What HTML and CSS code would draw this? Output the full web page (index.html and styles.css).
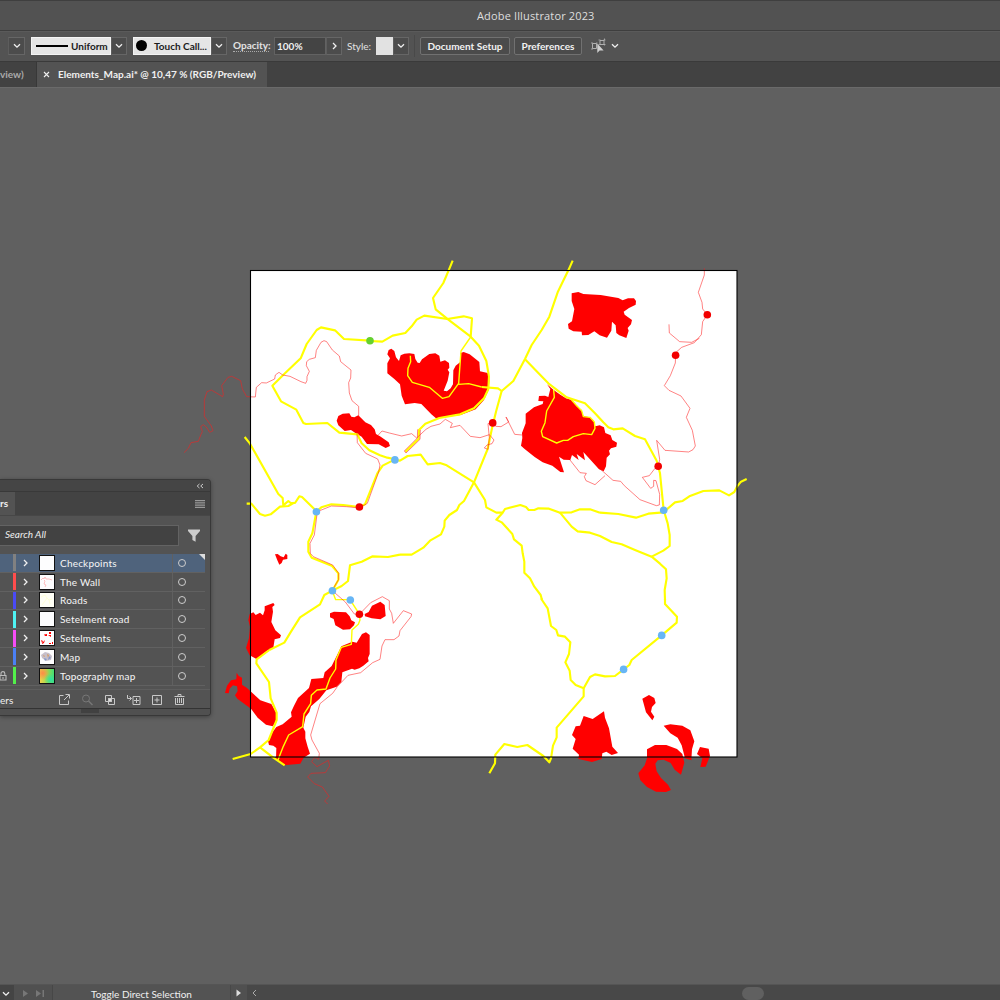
FILE: index.html
```html
<!DOCTYPE html>
<html lang="en">
<head>
<meta charset="utf-8">
<title>Adobe Illustrator 2023</title>
<link rel="stylesheet" href="styles.css">
</head>
<body>
<svg width="0" height="0" class="defs">
  <symbol id="down" viewBox="0 0 8 6"><path d="M1 1.2 4 4.2 7 1.2" fill="none" stroke="currentColor" stroke-width="1.3"/></symbol>
  <symbol id="right" viewBox="0 0 5 8"><path d="M1 1 4 4 1 7" fill="none" stroke="currentColor" stroke-width="1.3"/></symbol>
</svg>
<div class="app">
  <header class="titlebar"><span class="title">Adobe Illustrator 2023</span></header>
  <div class="toolbar">
    <div class="drop first"><svg class="chev"><use href="#down"/></svg></div>
    <div class="light uniform"><i class="line"></i><span class="t-uniform">Uniform</span></div>
    <div class="drop"><svg class="chev"><use href="#down"/></svg></div>
    <div class="light touch"><i class="dot"></i><span class="t-touch">Touch Call...</span></div>
    <div class="drop"><svg class="chev"><use href="#down"/></svg></div>
    <div class="label opacity"><span class="t-opacity">Opacity:</span></div>
    <div class="field"><span class="t-100">100%</span></div>
    <div class="drop"><svg class="chev-r"><use href="#right"/></svg></div>
    <div class="label style"><span class="t-style">Style:</span></div>
    <div class="swatch"></div>
    <div class="drop"><svg class="chev"><use href="#down"/></svg></div>
    <div class="sep"></div>
    <button class="btn setup"><span class="t-setup">Document Setup</span></button>
    <button class="btn prefs"><span class="t-prefs">Preferences</span></button>
    <svg class="select-icon" viewBox="0 0 16 16"><g fill="none" stroke="#b0b0b0"><path d="M1.500 5.500h4v5h-4zM9 2.500h4v4h-4z"/><path d="M0 5h2M0 11h2M5 5h1.500M7.500 2h2M12.500 2h2M13.500 .5v2M12.500 6.500h2M13.500 6v1.500M7.500 6.500h2" stroke-width=".8"/></g><path d="M6.300 5.500v9.500l2.300-2.500h4z" fill="#d0d0d0"/></svg>
    <svg class="chev end"><use href="#down"/></svg>
  </div>
  <div class="tabs">
    <div class="tab old"><span class="t-old">view)</span></div>
    <div class="tab active"><svg class="close" viewBox="0 0 7 7"><path d="M1 1 6 6M6 1 1 6" stroke="#f0f0f0" stroke-width="1.1"/></svg><span class="t-tab">Elements_Map.ai* @ 10,47 % (RGB/Preview)</span></div>
  </div>
  <main class="workspace">
    <svg class="map" viewBox="0 87 1000 897">
      <rect x="251" y="271" width="486" height="486" fill="#fff"/>
      <g class="area">
        <g transform="translate(180 310) scale(.33333)">
          <path d="M470 332 475 318 488 311 508 310 514 320 523 322 535 316 556 337 573 345 584 358 588 372 600 379 626 397 630 408 617 414 596 403 561 402 545 380 526 369 513 360 494 363 475 346Z"/>
        </g>
        <g transform="translate(370 255) scale(.33333)">
          <path d="M56 285 64 281 73 288 78 307 87 318 92 301 103 296 118 295 133 297 136 312 143 323 149 324 156 313 178 297 196 295 208 302 211 320 225 316 237 324 238 338 233 344 238 352 233 377 221 407 231 409 242 400 249 388 250 346 257 332 270 322 271 294 281 291 299 298 314 310 328 321 330 349 353 354 358 375 356 405 342 435 317 463 272 480 198 490 184 478 154 447 134 444 105 448 95 422 90 388 73 372 52 355 52 325 60 310 52 298Z"/>
        </g>
        <g transform="translate(500 260) scale(.33333)">
          <path d="M215 100 235 96 250 102 302 105 355 114 368 121 384 115 402 115 408 123 407 134 387 144 371 155 374 164 396 180 393 193 383 204 386 212 379 234 358 226 349 219 347 196 336 185 334 212 321 233 299 226 283 214 265 225 246 226 245 215 220 214 206 206 204 192 216 184 223 147 215 123Z"/>
          <path d="M141 373 161 390 181 404 198 415 215 420 230 439 244 449 250 468 269 472 280 481 286 499 299 496 312 502 316 519 332 526 337 540 351 548 349 560 333 565 327 572 330 583 320 593 318 619 311 634 297 628 278 607 250 576 255 601 230 582 236 600 216 585 211 600 191 599 177 590 192 637 181 636 157 617 128 607 104 591 73 566 63 557 67 534 66 519 77 490 77 461 102 442 128 432 130 424 115 423 117 408 135 407 145 411 151 387Z"/>
        </g>
        <g transform="translate(220 490) scale(.33333)">
          <path d="M165 193 173 192 182 199 191 202 197 191 202 195 202 207 189 209 185 219 178 224 172 211Z"/>
        </g>
        <g transform="translate(220 590) scale(.33333)">
          <path d="M89 72 100 67 107 75 120 68 129 76 134 61 134 49 160 39 164 45 157 51 159 65 154 96 166 121 183 136 180 144 164 148 160 173 140 183 111 208 89 196 78 174 87 144 90 110 85 90Z"/>
          <path d="M330 70 342 65 378 67 389 79 394 91 405 97 402 106 390 118 369 119 346 106 341 87 330 82Z"/>
          <path d="M434 72 446 66 456 47 481 35 494 45 497 78 481 88 455 85 435 79Z"/>
          <path d="M50 248 56 258 66 263 66 284 80 293 121 331 154 342 169 368 169 394 158 409 138 404 113 383 93 356 52 326 45 316 53 303 51 289 39 286 29 296 26 310 15 309 21 287 33 271 49 268Z"/>
          <path d="M364 169 397 155 410 158 426 132 438 127 449 135 449 192 444 204 446 214 430 227 418 235 404 239 396 236 367 247 364 276 350 290 319 301 298 327 273 349 268 366 257 380 250 413 256 425 256 445 263 470 270 491 251 503 241 521 192 526 168 508 169 474 160 467 147 465 144 453 155 430 169 411 188 403 215 380 213 367 222 347 234 324 267 294 274 267 310 264 314 247 335 228 348 202Z"/>
        </g>
        <g transform="translate(480 600) scale(.33333)">
          <path d="M311 348 338 357 372 334 375 353 387 385 397 440 414 459 395 465 379 455 367 460 365 477 336 486 295 477 297 464 278 446 287 417 276 405 287 379 300 377Z"/>
          <path d="M487 296 507 285 523 294 527 309 516 321 513 335 523 350 517 361 498 337Z"/>
          <path d="M551 377 571 373 607 377 631 391 643 424 636 448 634 481 615 475 605 436 593 413 571 400Z"/>
          <path d="M501 448 525 435 559 435 591 447 607 462 613 488 603 524 584 509 572 489 551 479 533 481 526 491 530 514 543 534 564 554 573 570 558 576 528 575 501 561 481 541 475 520 494 496 501 475Z"/>
          <path d="M660 441 686 446 690 468 677 500 661 501 667 475 651 462Z"/>
        </g>
      </g>
      <g class="road">
        <g transform="translate(180 310) scale(.33333)">
          <path d="M570 92 492 87 465 61 423 52 410 60 380 102 362 145 315 190 277 227 303 274 349 299 370 339 378 342 442 339 478 368 532 373 545 400 568 421 600 436 622 443 645 448"/>
          <path d="M194 381 210 401 295 552 308 564 310 586 325 573 332 579 345 579 358 559 366 561 410 604"/>
          <path d="M410 604 424 592 454 583 490 585 538 591 555 583 592 490 608 467 645 448"/>
        </g>
        <g transform="translate(370 255) scale(.33333)">
          <path d="M248 17 236 46 220 84 189 129 197 163 235 194 302 245 327 272 349 318 357 365 355 402 342 430 312 460 270 478 208 489 166 506 147 525 146 551 106 590"/>
          <path d="M0 258 37 260 68 242 106 234 125 214 140 194 163 182 232 192 281 184 306 190 302 246"/>
          <path d="M608 17 595 46 563 112 538 185 515 225 485 270 465 312 430 378 395 408 384 400 335 396"/>
          <path d="M395 408 378 470 366 520 353 582 312 682"/>
        </g>
        <g transform="translate(400 420) scale(.33333)">
          <path d="M-15 120 0 122 23 108 62 104 83 133 120 129 140 136 222 187 255 240 259 262 289 278 308 278 315 267 361 255 378 261 386 270 403 270 415 265 447 266 480 278 515 277 540 268 570 268 600 278"/>
          <path d="M480 278 515 320 533 334 570 338 600 348 635 366 665 373 705 390 755 410"/>
          <path d="M308 278 289 299 305 307 337 342 342 358 365 377 368 400 373 425 373 458 390 475 403 500 422 525 426 540"/>
          <path d="M222 187 192 243 178 255 171 270 148 285 134 302 133 320 123 343 90 362 70 383 35 404 0 404"/>
        </g>
        <g transform="translate(500 260) scale(.33333)">
          <path d="M75 298 145 370 200 412 255 430 285 460 310 487 325 502 340 508 368 505 405 528 435 538 470 602 480 640 491 750"/>
          <path d="M300 758 355 762 408 773 445 761 490 757 525 727 548 723 568 709 610 693 658 691 687 706 703 696 711 680 723 665 740 657"/>
          <path d="M491 750 503 790 509 825 509 858 490 872 455 890 480 911 498 928 500 955 494 990 495 1020"/>
        </g>
        <g transform="translate(220 490) scale(.33333)">
          <path d="M540 194 504 201 458 199 425 215 390 226 384 273 365 288 337 302 313 315 300 343 240 382 213 425 193 458 148 480"/>
          <path d="M80 41 94 41 120 72 135 77 152 73 180 50 205 48 223 38"/>
          <path d="M289 65 277 130 265 155 265 185 275 203 335 227 355 250 355 270 337 302"/>
        </g>
        <g transform="translate(220 590) scale(.33333)">
          <path d="M148 180 110 208 109 220 147 276 152 325 170 368 170 390 146 450 120 472 92 492 38 507"/>
          <path d="M120 472 160 503 194 526"/>
        </g>
        <g transform="translate(480 600) scale(.33333)">
          <path d="M184 -5 186 0 203 25 213 78 229 90 234 106 255 110 271 127 267 162 256 187 269 212 272 240 287 255 311 265 311 289 230 383 230 412 219 437 213 475 208 487 190 468 142 435 112 441 73 432 46 464 45 490 28 520"/>
          <path d="M311 265 330 231 345 223 375 229 405 228 431 208 448 195 455 180 545 106 590 68 591 50 555 12 555 -3"/>
        </g>
      </g>
      <g class="road thin">
        <g transform="translate(370 255) scale(.33333)">
          <path d="M302 246 273 288 266 385 237 425 217 430 178 397 127 382 113 362 114 340 122 320 121 302M266 388 296 386 335 396"/>
        </g>
        <g transform="translate(500 260) scale(.33333)">
          <path d="M161 390 163 412 140 453 135 488 124 514 128 530 170 549 190 541 203 541 220 530 250 521 275 524 285 505 283 486 270 472 250 470 245 452 228 435 213 418"/>
        </g>
        <g transform="translate(220 590) scale(.33333)">
          <path d="M337 3 347 29 390 29 418 72 420 90 415 103 396 120 394 163 364 172 348 210 347 237 330 264 318 297 291 300 274 316 272 341 252 372 248 410 206 435 190 469 174 510"/>
        </g>
      </g>
      <g class="wall">
        <g transform="translate(180 310) scale(.33333)">
          <path d="M12 428 25 415 33 398 55 394 63 373 67 365 62 350 70 344 79 351 89 367 99 362 94 348 73 319 73 270 81 245 94 240 128 260 130 252 125 227 144 202 155 199 182 212 187 237 200 260 226 261 229 232 245 218 259 219 284 207 286 195 297 187 308 195 330 199 363 215 377 220 381 211 381 200 388 184 379 167 380 155 388 148 406 143 409 121 423 97 432 92 440 95 457 120 478 138 482 155 498 168 513 180 512 204 506 218 508 249 516 272 536 289 536 320M531 370 532 398 557 430 593 447 600 465 596 486 562 580 538 594 500 590 454 588 414 604"/>
        </g>
        <g transform="translate(370 255) scale(.33333)">
          <path d="M25 540 36 528 58 534 95 543 125 536 140 549 168 523 183 514 210 507 226 493 247 505 241 518 270 511 301 544 330 548 358 539 372 555 366 566 351 570 343 579 354 583 358 549 354 506 366 503 378 514 393 515 416 501 408 486 434 538 456 540M143 523 142 549 103 588 108 594 150 553 151 525"/>
        </g>
        <g transform="translate(500 260) scale(.33333)">
          <path d="M613 25V45L595 97 606 127 608 147 622 164 608 185 604 224 583 248 545 262 527 278 526 309 511 347 493 377 507 391 543 408 570 445 559 472 577 511 586 558 579 569 566 576 495 571 470 541 479 598 475 618 465 625 448 647 427 652 452 685 461 679 461 661 468 662 479 703 478 735 469 737 420 719 373 677 362 664 339 661 303 629M507 193 508 219 539 245 575 247 598 235M210 600 240 638 259 640 253 650 258 662 285 674 315 647"/>
        </g>
        <g transform="translate(220 490) scale(.33333)">
          <path d="M292 65 283 135 270 160 271 190 280 200 338 225 356 250 356 268 340 295M337 302 376 336 403 372 418 373 452 338 487 320 508 332 508 357 515 370 520 400 550 362 575 372 573 380 540 422 537 438 522 449 495 449 486 468 480 508 458 518 422 548 384 556 352 590 338 610 300 641 272 735 276 750 298 790 296 808 284 802 275 815 291 830 325 811 329 828 316 848 273 850 263 861 283 881 307 891 327 919 314 933 323 942"/>
        </g>
      </g>
      <rect x="250.500" y="270.500" width="486.500" height="486.500" fill="none" stroke="#000" stroke-width="1.1"/>
      <g fill="#f20000"><circle cx="707.300" cy="314.800" r="3.800"/><circle cx="675.600" cy="355.300" r="3.800"/><circle cx="492.700" cy="422.900" r="3.800"/><circle cx="658.200" cy="466.200" r="3.800"/><circle cx="359.400" cy="507" r="3.800"/><circle cx="359.400" cy="614.300" r="3.800"/></g>
      <g fill="#67b6f5"><circle cx="394.900" cy="459.900" r="3.800"/><circle cx="316.400" cy="511.800" r="3.800"/><circle cx="663.700" cy="510.300" r="3.800"/><circle cx="332.400" cy="590.800" r="3.800"/><circle cx="350.300" cy="600" r="3.800"/><circle cx="661.700" cy="635.400" r="3.800"/><circle cx="623.600" cy="669.400" r="3.800"/></g>
      <circle cx="370" cy="340.800" r="3.800" fill="#65d12f"/>
    </svg>
    <aside class="panel">
      <div class="panel-top"><svg class="collapse" viewBox="0 0 8 6"><path d="M3.500 1 1.200 3 3.500 5M7 1 4.700 3 7 5" fill="none" stroke="#ccc"/></svg></div>
      <div class="panel-tabs"><div class="panel-tab"><span class="t-rs">rs</span></div><svg class="menu" viewBox="0 0 10 8"><path d="M0 .7h10M0 2.900h10M0 5.100h10M0 7.300h10" stroke="#bbb" stroke-width=".9"/></svg></div>
      <div class="panel-body">
        <div class="search-row"><div class="search"><span class="t-search">Search All</span></div><svg class="funnel" viewBox="0 0 12 13"><path d="M0 .5h12V2L7.600 7v5.700L4.400 11V7L0 2z" fill="#ccc"/></svg></div>
        <div class="layers">
          <div class="row selected"><i class="bar gray"></i><svg class="arrow"><use href="#right"/></svg><i class="thumb"></i><span class="name t-l1">Checkpoints</span><i class="ring"></i><i class="corner"></i></div>
          <div class="row"><i class="bar red"></i><svg class="arrow"><use href="#right"/></svg><svg class="thumb" viewBox="0 0 14 14"><path d="M1 5 3 3 4 4 5 2 6 4 9 4 12 5M4 5 5 6 4 9 6 10 5 12" fill="none" stroke="#f99" stroke-width=".6"/></svg><span class="name t-l2">The Wall</span><i class="ring"></i></div>
          <div class="row"><i class="bar blue"></i><svg class="arrow"><use href="#right"/></svg><svg class="thumb cream" viewBox="0 0 14 14"><path d="M1 4 5 2 7 5 9 7 12 6M7 5 5 8 2 12M9 7 10 11" fill="none" stroke="#ffc" stroke-width=".7"/></svg><span class="name t-l3">Roads</span><i class="ring"></i></div>
          <div class="row"><i class="bar cyan"></i><svg class="arrow"><use href="#right"/></svg><i class="thumb"></i><span class="name t-l4">Setelment road</span><i class="ring"></i></div>
          <div class="row"><i class="bar pink"></i><svg class="arrow"><use href="#right"/></svg><svg class="thumb" viewBox="0 0 14 14"><path d="M4 3.500 7 3 7 5 5 5zM9 1h2v2H9zM8 4l3 0v2zM1 9l2 1-1 2zM2 12l3-3-1 3-2 1zM9 12h2v1H9zM12 11h1v2h-1z" fill="red"/></svg><span class="name t-l5">Setelments</span><i class="ring"></i></div>
          <div class="row"><i class="bar azure"></i><svg class="arrow"><use href="#right"/></svg><svg class="thumb" viewBox="0 0 14 14"><path d="M1 5 5 2 9 3 12 6 11 10 6 11 2 8z" fill="#c6bfca"/><path d="M7 4 9 5 8 8zM3 5l2 1-1 1z" fill="#d59a60"/><path d="M9 6l2 2-3 2zM4 8l3 1-2 2z" fill="#8498cb"/></svg><span class="name t-l6">Map</span><i class="ring"></i></div>
          <div class="row"><svg class="lock" viewBox="0 0 8 10"><path d="M0 4.500h6v4.500H0zM1 4V2.500a1.900 1.900 0 0 1 3.800 0V4M3 6v2" fill="none" stroke="#bbb" stroke-width="1.100"/></svg><i class="bar green"></i><svg class="arrow"><use href="#right"/></svg><i class="thumb topo"></i><span class="name t-l7">Topography map</span><i class="ring"></i></div>
        </div>
        <div class="panel-foot">
          <span class="t-ers">ers</span>
          <svg class="tools" viewBox="58 0 130 18" fill="none" stroke="#c8c8c8">
            <path d="M63.500 4.500h-4v9h9v-4M64 9 69 4M65.500 3.500h4v4"/>
            <g stroke="#777"><circle cx="86" cy="7.500" r="3.500"/><path d="m88.500 10 4 4" stroke-width="1.500"/></g>
            <path d="M105.500 4.500h6v6h-6zM108.500 7.500h6v6h-6z"/><path d="M108.500 7.500h3v3h-3z" fill="#ddd"/>
            <path d="M127.500 4v3.500h4M129.500 5.500l2 2-2 2M133 5.500h7v8h-7zM136.500 7v5M134 9.500h5"/>
            <path d="M152.500 4.500h9v9h-9zM157 6.500v5M154.500 9h5"/>
            <path d="M174.500 5.500h10M178 5.500v-2h3v2M175.500 7v6.500h8V7M177.500 7v5M179.500 7v5M181.500 7v5"/>
          </svg>
        </div>
      </div>
      <div class="grip-row"><i class="grip"></i></div>
    </aside>
  </main>
  <footer class="status">
    <div class="s-drop"><svg class="chev"><use href="#down"/></svg></div>
    <svg class="nav" viewBox="0 0 38 16" fill="#777"><path d="M9 5v7l5-3.500zM22 5v7l5-3.500zM28.500 5H30v7h-1.500z"/></svg>
    <div class="tool"><span class="t-status">Toggle Direct Selection</span></div>
    <div class="play"><svg viewBox="0 0 6 8"><path d="M.5.500v7L5 4z" fill="#ddd"/></svg></div>
    <div class="scroll"><svg class="left" viewBox="0 0 5 8"><path d="M4 1 1 4 4 7" fill="none" stroke="#aaa"/></svg><i class="handle"></i></div>
  </footer>
</div>
</body>
</html>
```
FILE: styles.css
```css
* { box-sizing: border-box; }
body { margin: 0; background: #606060; color: #f0f0f0; font: 700 10px/1 Lato, "Open Sans", sans-serif; }
span { white-space: nowrap; }
i { display: block; flex: none; }
svg { display: block; flex: none; }
.defs { position: absolute; }
.app { width: 1000px; height: 1000px; overflow: hidden; display: flex; flex-direction: column; }
.titlebar { height: 31px; flex: none; background: #525252; border-top: 1px solid #3f3f3f; border-bottom: 1px solid #3e3e3e; padding: 0 0 0 477px; display: flex; align-items: center; }
.title { font-family: "Open Sans", sans-serif; font-size: 11px; font-weight: 400; color: #dedede; letter-spacing: .15px; }
.toolbar { height: 30px; flex: none; background: #535353; display: flex; align-items: center; border-top: 1px solid #5a5a5a; padding-bottom: 2px; }
.drop { width: 16px; height: 18px; flex: none; border: 1px solid #666; border-left-color: #5d5d5d; background: #4c4c4c; display: flex; align-items: center; justify-content: center; }
.drop.first { width: 17px; margin-left: 8px; margin-right: 6px; }
.chev { width: 8px; height: 6px; }
.chev-r { width: 5px; height: 8px; }
.light { height: 18px; background: #e5e5e5; border: 1px solid #f4f4f4; color: #1b1b1b; display: flex; align-items: center; flex: none; }
.uniform { width: 80px; padding-left: 4px; }
.line { width: 32px; height: 2px; background: #000; margin-right: 3px; }
.touch { width: 78px; margin-left: 6px; padding-left: 2px; }
.dot { width: 11px; height: 11px; border-radius: 50%; background: #000; margin-right: 7px; }
.label { flex: none; color: #e2e2e2; }
.opacity { width: 36px; margin: 0 5px 0 6px; padding-bottom: 1px; border-bottom: 1px dotted #aaa; }
.field { width: 52px; height: 18px; flex: none; border: 1px solid #626262; background: #444; padding-left: 2px; display: flex; align-items: center; }
.style { width: 25px; margin: 0 4px 0 5px; font-weight: 400; }
.swatch { width: 17px; height: 18px; flex: none; background: #e2e2e2; }
.sep { width: 1px; height: 22px; margin: 0 5px; background: #494949; }
.btn { height: 18px; flex: none; padding: 0; background: #4b4b4b; border: 1px solid #717171; border-radius: 2px; font: inherit; color: #f2f2f2; display: flex; align-items: center; justify-content: center; }
.setup { width: 90px; }
.prefs { width: 68px; margin-left: 4px; }
.select-icon { width: 16px; height: 16px; margin-left: 9px; }
.chev.end { margin-left: 4px; }
.tabs { height: 26px; flex: none; background: #424242; border-top: 1px solid #3a3a3a; display: flex; }
.tab { display: flex; align-items: center; padding-bottom: 1px; }
.old { width: 37px; border-right: 1px solid #383838; color: #aaa; }
.active { width: 230px; background: #535353; padding-left: 6px; }
.close { width: 7px; height: 7px; margin-right: 8px; }
.workspace { flex: 1; min-height: 0; background: #606060; box-shadow: inset 0 1px #6a6a6a; position: relative; }
.map { width: 1000px; height: 897px; }
.area { fill: #f00; }
.road { fill: none; stroke: #ff0; stroke-width: 6.4; stroke-linejoin: round; }
.road.thin { stroke-width: 4.2; }
.wall { fill: none; stroke: #ff1c1c; stroke-opacity: .55; stroke-width: 3; stroke-linejoin: round; }
.panel { position: absolute; left: 0; top: 392px; width: 211px; height: 237px; background: #535353; border: 1px solid #383838; border-left: 0; border-radius: 0 4px 4px 0; box-shadow: 0 1px 4px rgba(0,0,0,.35); overflow: hidden; display: flex; flex-direction: column; }
.panel-top { height: 12px; flex: none; background: #454545; border-bottom: 1px solid #393939; display: flex; align-items: center; justify-content: flex-end; padding-right: 6px; }
.collapse { width: 8px; height: 6px; }
.panel-tabs { height: 23px; flex: none; background: #434343; display: flex; align-items: center; justify-content: space-between; padding-right: 5px; }
.panel-tab { width: 15px; height: 23px; background: #535353; display: flex; align-items: center; padding-bottom: 2px; }
.menu { width: 10px; height: 8px; }
.panel-body { flex: 1; min-height: 0; padding-top: 8px; display: flex; flex-direction: column; border-top: 1px solid #474747; }
.search-row { height: 22px; flex: none; display: flex; align-items: center; }
.search { width: 179px; height: 21px; background: #424242; border: 1px solid #636363; border-left: 0; padding: 0 0 2px 5px; display: flex; align-items: center; font-style: italic; font-weight: 400; }
.funnel { width: 12px; height: 13px; margin-left: 9px; }
.layers { width: 205px; height: 132px; margin-top: 8px; flex: none; display: flex; flex-direction: column; }
.row { height: 18.800px; flex: none; display: flex; align-items: center; border-bottom: 1px solid #616161; position: relative; padding-left: 13px; }
.selected { background: #4f637c; }
.bar { width: 3px; height: 17px; margin-right: 7px; }
.gray { background: #818181; }
.red { background: #ff4d4d; }
.blue { background: #4a4af5; }
.cyan { background: #4ff3f3; }
.pink { background: #f64df6; }
.azure { background: #4b80f5; }
.green { background: #53ef4b; }
.arrow { width: 5px; height: 8px; margin: 0 11px 0 0; }
.thumb { width: 16px; height: 16px; background: #fdfdfe; border: 1px solid #111; margin-right: 5px; }
.cream { background: #fffff5; }
.topo { background: radial-gradient(circle at 75% 75%, #30e0a0, transparent 42%), radial-gradient(circle at 20% 30%, #ff8b45, transparent 45%), linear-gradient(90deg, #f7cf4d, #9fdb4e, #42dd75); }
.name { flex: 1; font-weight: 400; color: #f6f6f6; letter-spacing: .2px; }
.ring { width: 8px; height: 8px; border: 1px solid #ccc; border-radius: 50%; margin-right: 19px; }
.row::after { content: ""; position: absolute; left: 172px; top: 0; width: 1px; height: 100%; background: #606060; }
.corner { position: absolute; right: 0; top: 0; border-top: 6px solid #ddd; border-left: 6px solid transparent; }
.lock { position: absolute; left: 0; top: 4px; width: 8px; height: 10px; }
.panel-foot { height: 20px; margin-top: 3px; flex: none; display: flex; align-items: center; border-top: 1px solid #5e5e5e; }
.t-ers { width: 58px; font-weight: 400; }
.tools { width: 130px; height: 18px; }
.grip-row { height: 7px; flex: none; background: #505050; border-top: 1px solid #333; padding-left: 81px; }
.grip { width: 18px; height: 4px; background: #414141; }
.status { height: 16px; flex: none; background: #4d4d4d; border-top: 1px solid #555; display: flex; }
.status > * { height: 16px; display: flex; align-items: center; flex: none; }
.s-drop { width: 14px; padding-left: 2px; background: #444; padding-top: 2px; }
.nav { width: 38px; background: #505050; }
.tool { width: 179px; padding: 2px 0 0 38px; background: #535353; border-left: 1px solid #474747; border-right: 1px solid #484848; font-weight: 400; }
.play { width: 16px; padding-left: 5px; background: #505050; }
.play svg { width: 6px; height: 8px; }
.scroll { width: 753px; background: #484848; padding-left: 5px; }
.left { width: 5px; height: 8px; }
.handle { width: 22px; height: 13px; border-radius: 7px; margin-left: 485px; background: #606060; }
```
